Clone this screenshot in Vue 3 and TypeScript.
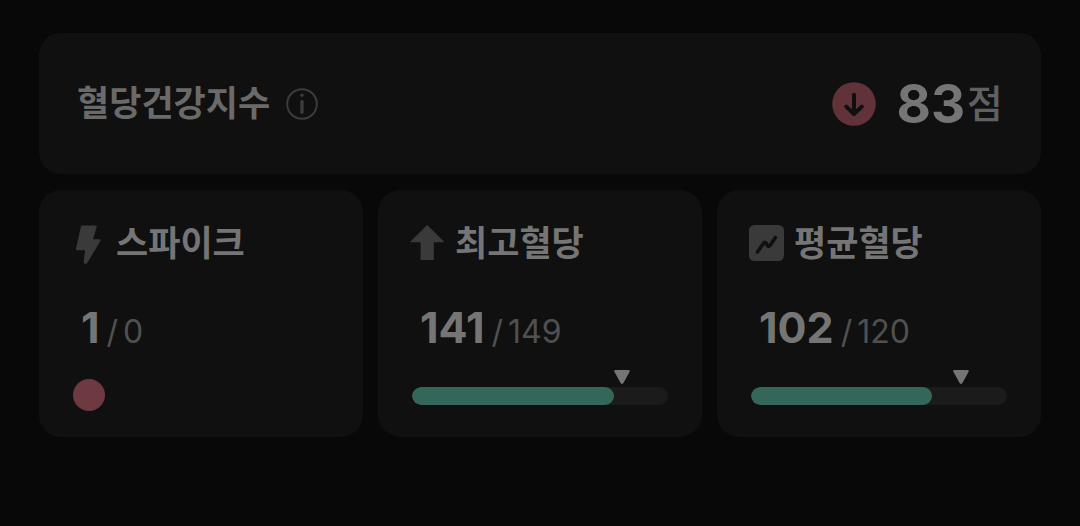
<script setup lang="ts">
type IconName = 'bolt' | 'arrow' | 'chart'

interface Metric {
  id: string
  label: string
  icon: IconName
  value: number
  previous: number
  fill?: number
  marker?: number
}

const score = 83

const metrics: Metric[] = [
  { id: 'spike', label: '스파이크', icon: 'bolt', value: 1, previous: 0 },
  { id: 'peak', label: '최고혈당', icon: 'arrow', value: 141, previous: 149, fill: 78.8, marker: 82.2 },
  { id: 'average', label: '평균혈당', icon: 'chart', value: 102, previous: 120, fill: 70.8, marker: 82.2 },
]
</script>

<template>
  <main class="dashboard">
    <section class="card summary">
      <div class="summary-title">
        <h1 class="heading">혈당건강지수</h1>
        <button class="info" type="button" aria-label="혈당건강지수 안내">
          <svg viewBox="0 0 32 32" aria-hidden="true">
            <circle cx="16" cy="16" r="14.8" fill="none" stroke="currentColor" stroke-width="2" />
            <circle cx="16" cy="7.2" r="1.7" fill="currentColor" />
            <path d="M16 13.6V24.2" stroke="currentColor" stroke-width="3.4" stroke-linecap="round" />
          </svg>
        </button>
      </div>
      <div class="score">
        <svg class="trend" viewBox="0 0 44 44" aria-hidden="true">
          <circle cx="22" cy="22" r="21.8" fill="#613339" />
          <path
            d="M22 12.8V31.4M14.2 24.6L22 32L29.8 24.6"
            fill="none"
            stroke="#101010"
            stroke-width="4"
            stroke-linecap="round"
            stroke-linejoin="round"
          />
        </svg>
        <p class="score-text">
          <strong class="score-value">{{ score }}</strong><span class="score-unit">점</span>
        </p>
      </div>
    </section>

    <div class="metrics">
      <section v-for="metric in metrics" :key="metric.id" class="card metric">
        <header class="metric-title">
          <svg v-if="metric.icon === 'bolt'" class="icon" viewBox="0 0 36 40" aria-hidden="true">
            <path
              d="M11.4 1.5H24.4Q26.2 1.5 25.6 3.2L22 15.2H28.4Q30.4 15.2 29.4 17L16.2 39Q15 40.8 13.2 39.6Q12.6 39 12.7 38.2L14 26.2H6.4Q4.6 26.2 5.1 24.2L9.8 2.9Q10.2 1.5 11.4 1.5Z"
              fill="currentColor"
            />
          </svg>
          <svg v-else-if="metric.icon === 'arrow'" class="icon" viewBox="0 0 36 40" aria-hidden="true">
            <path d="M17.2 1L34.6 18.2H23.8V36H10.6V18.2H-.2Z" fill="currentColor" />
          </svg>
          <svg v-else class="icon" viewBox="0 0 36 40" aria-hidden="true">
            <rect x="0" y="1" width="35" height="36" rx="5.5" fill="currentColor" />
            <path
              d="M8.4 28L14.6 19.2Q16 17.4 17.2 19.2L18.4 21.4Q19.6 23.2 21 21.4L26.4 13.4"
              fill="none"
              stroke="#101010"
              stroke-width="3.6"
              stroke-linecap="round"
              stroke-linejoin="round"
            />
          </svg>
          <h2 class="heading">{{ metric.label }}</h2>
        </header>

        <p class="reading">
          <strong class="value">{{ metric.value }}</strong>
          <span class="slash">/</span>
          <span class="previous">{{ metric.previous }}</span>
        </p>

        <div v-if="metric.fill !== undefined" class="gauge">
          <svg class="marker" :style="{ left: metric.marker + '%' }" viewBox="0 0 16 14" aria-hidden="true">
            <path d="M1.6 0H14.4Q16.4 0 15.6 1.8L9.4 13Q8 15 6.6 13L.4 1.8Q-.4 0 1.6 0Z" fill="currentColor" />
          </svg>
          <div
            class="track"
            role="meter"
            :aria-label="metric.label"
            aria-valuemin="0"
            aria-valuemax="100"
            :aria-valuenow="metric.fill"
          >
            <div class="fill" :style="{ width: metric.fill + '%' }"></div>
          </div>
        </div>
        <span v-else class="dot"></span>
      </section>
    </div>
  </main>
</template>

<style>
body {
  margin: 0;
  background: #080808;
}
</style>

<style scoped>
.dashboard {
  display: flex;
  flex-direction: column;
  gap: 16px;
  padding: 33px 39px;
  color: #757575;
  font-family: Inter, "Noto Sans CJK KR", sans-serif;
  font-optical-sizing: none;
}

.card {
  border-radius: 22px;
  background: #101010;
}

.heading {
  margin: 0;
  padding-bottom: 2px;
  color: #757575;
  font-size: 35px;
  font-weight: 700;
  line-height: 42px;
  white-space: nowrap;
}

.summary {
  display: flex;
  align-items: center;
  justify-content: space-between;
  min-height: 141px;
  padding: 0 38px;
  box-sizing: border-box;
}

.summary .heading {
  color: #6a6a6a;
}

.summary-title,
.score {
  display: flex;
  align-items: center;
}

.summary-title {
  gap: 16px;
}

.info {
  width: 32px;
  height: 32px;
  padding: 0;
  border: 0;
  background: none;
  color: #3c3c3c;
}

.info svg {
  display: block;
  width: 100%;
  height: 100%;
}

.score {
  gap: 20px;
}

.trend {
  width: 44px;
  height: 44px;
}

.score-text {
  display: flex;
  align-items: center;
  gap: 2px;
  margin: 0;
  line-height: 60px;
}

.score-value {
  font-size: 53px;
  font-weight: 700;
}

.score-unit {
  color: #606060;
  font-size: 39px;
  font-weight: 500;
}

.metrics {
  display: grid;
  grid-template-columns: repeat(3, 1fr);
  gap: 15px;
}

.metric {
  display: flex;
  flex-direction: column;
  min-height: 247px;
  padding: 32px 34px 26px 32px;
  box-sizing: border-box;
}

.metric-title {
  display: flex;
  align-items: center;
  gap: 9px;
}

.icon {
  flex: none;
  width: 36px;
  height: 40px;
  overflow: visible;
  color: #3a3a3a;
}

.reading {
  display: flex;
  align-items: baseline;
  margin: 36px 0 0 10px;
  line-height: 50px;
}

.value {
  font-size: 43px;
  font-weight: 700;
}

.slash,
.previous {
  color: #505050;
  font-size: 32px;
  font-weight: 400;
}

.slash {
  margin: 0 5px 0 7px;
}

.gauge {
  position: relative;
  margin: 30px 0 0 2px;
}

.marker {
  position: absolute;
  top: -17px;
  width: 16px;
  height: 14px;
  transform: translateX(-50%);
}

.track {
  height: 18px;
  overflow: hidden;
  border-radius: 9px;
  background: #1b1b1b;
}

.fill {
  height: 100%;
  border-radius: 9px;
  background: #35665a;
}

.dot {
  width: 32px;
  height: 32px;
  margin: 22px 0 0 2px;
  border-radius: 50%;
  background: #6e3a42;
}
</style>
